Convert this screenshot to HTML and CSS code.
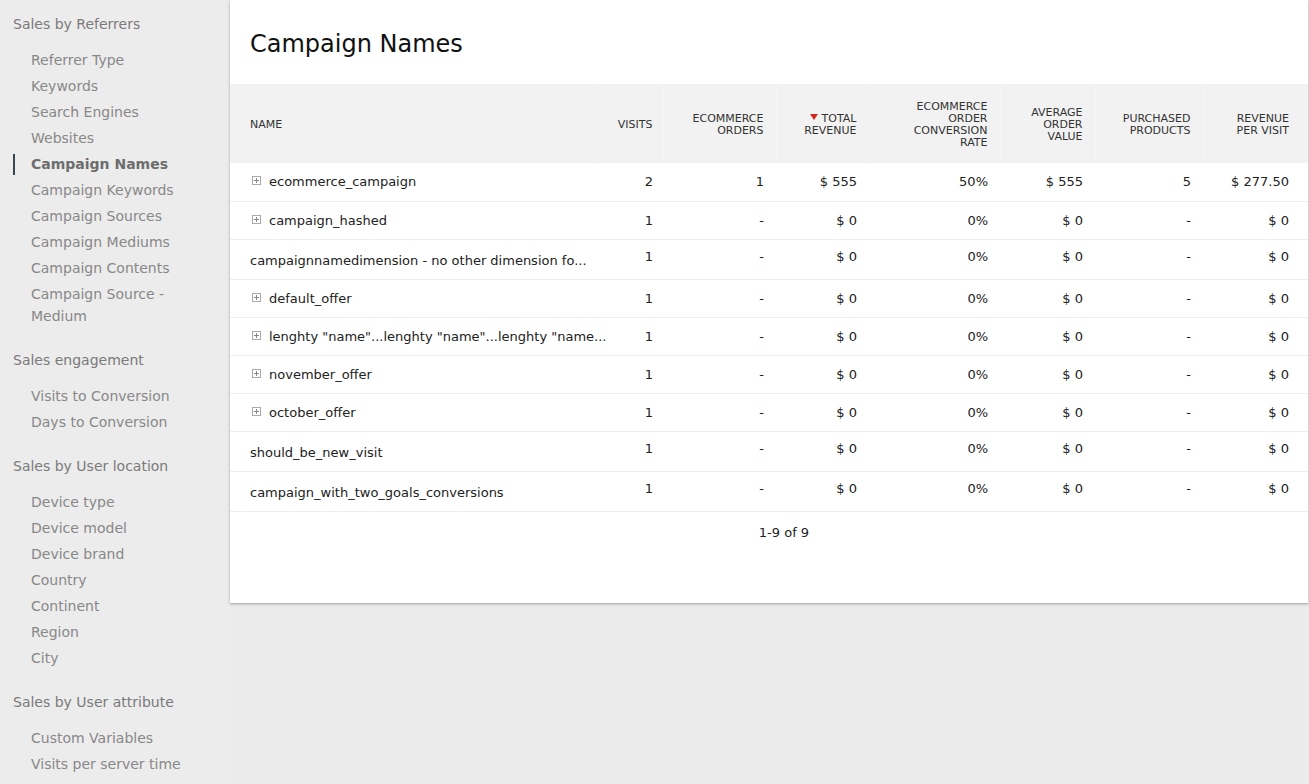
FILE: index.html
```html
<!DOCTYPE html>
<html>
<head>
<meta charset="utf-8">
<link rel="stylesheet" href="styles.css">
</head>
<body>
<div class="page">
  <nav class="sidebar">
    <div class="group">
      <div class="group-title">Sales by Referrers</div>
      <ul class="items">
        <li>Referrer Type</li>
        <li>Keywords</li>
        <li>Search Engines</li>
        <li>Websites</li>
        <li class="active">Campaign Names</li>
        <li>Campaign Keywords</li>
        <li>Campaign Sources</li>
        <li>Campaign Mediums</li>
        <li>Campaign Contents</li>
        <li>Campaign Source - Medium</li>
      </ul>
    </div>
    <div class="group">
      <div class="group-title">Sales engagement</div>
      <ul class="items">
        <li>Visits to Conversion</li>
        <li>Days to Conversion</li>
      </ul>
    </div>
    <div class="group">
      <div class="group-title">Sales by User location</div>
      <ul class="items">
        <li>Device type</li>
        <li>Device model</li>
        <li>Device brand</li>
        <li>Country</li>
        <li>Continent</li>
        <li>Region</li>
        <li>City</li>
      </ul>
    </div>
    <div class="group">
      <div class="group-title">Sales by User attribute</div>
      <ul class="items">
        <li>Custom Variables</li>
        <li>Visits per server time</li>
      </ul>
    </div>
  </nav>
  <main class="main">
    <section class="card">
      <h2 class="card-title">Campaign Names</h2>
      <table class="report">
        <colgroup>
          <col class="c-name"><col class="c-visits"><col class="c-orders"><col class="c-rev"><col class="c-conv"><col class="c-avg"><col class="c-prod"><col class="c-rpv">
        </colgroup>
        <thead>
          <tr>
            <th class="name">NAME</th>
            <th class="visits">VISITS</th>
            <th>ECOMMERCE<br>ORDERS</th>
            <th><span class="sort"></span>TOTAL<br>REVENUE</th>
            <th>ECOMMERCE<br>ORDER<br>CONVERSION<br>RATE</th>
            <th>AVERAGE<br>ORDER<br>VALUE</th>
            <th>PURCHASED<br>PRODUCTS</th>
            <th class="last">REVENUE<br>PER VISIT</th>
          </tr>
        </thead>
        <tbody>
          <tr class="sub">
            <td class="name"><span class="plus"></span>ecommerce_campaign</td>
            <td class="visits">2</td><td>1</td><td>$ 555</td><td>50%</td><td>$ 555</td><td>5</td><td class="last">$ 277.50</td>
          </tr>
          <tr class="sub">
            <td class="name"><span class="plus"></span>campaign_hashed</td>
            <td class="visits">1</td><td>-</td><td>$ 0</td><td>0%</td><td>$ 0</td><td>-</td><td class="last">$ 0</td>
          </tr>
          <tr class="plain">
            <td class="name">campaignnamedimension - no other dimension fo...</td>
            <td class="visits">1</td><td>-</td><td>$ 0</td><td>0%</td><td>$ 0</td><td>-</td><td class="last">$ 0</td>
          </tr>
          <tr class="sub">
            <td class="name"><span class="plus"></span>default_offer</td>
            <td class="visits">1</td><td>-</td><td>$ 0</td><td>0%</td><td>$ 0</td><td>-</td><td class="last">$ 0</td>
          </tr>
          <tr class="sub">
            <td class="name"><span class="plus"></span>lenghty "name"...lenghty "name"...lenghty "name...</td>
            <td class="visits">1</td><td>-</td><td>$ 0</td><td>0%</td><td>$ 0</td><td>-</td><td class="last">$ 0</td>
          </tr>
          <tr class="sub">
            <td class="name"><span class="plus"></span>november_offer</td>
            <td class="visits">1</td><td>-</td><td>$ 0</td><td>0%</td><td>$ 0</td><td>-</td><td class="last">$ 0</td>
          </tr>
          <tr class="sub">
            <td class="name"><span class="plus"></span>october_offer</td>
            <td class="visits">1</td><td>-</td><td>$ 0</td><td>0%</td><td>$ 0</td><td>-</td><td class="last">$ 0</td>
          </tr>
          <tr class="plain">
            <td class="name">should_be_new_visit</td>
            <td class="visits">1</td><td>-</td><td>$ 0</td><td>0%</td><td>$ 0</td><td>-</td><td class="last">$ 0</td>
          </tr>
          <tr class="plain">
            <td class="name">campaign_with_two_goals_conversions</td>
            <td class="visits">1</td><td>-</td><td>$ 0</td><td>0%</td><td>$ 0</td><td>-</td><td class="last">$ 0</td>
          </tr>
        </tbody>
      </table>
      <div class="pager">1-9 of 9</div>
    </section>
  </main>
</div>
</body>
</html>
```

FILE: styles.css
```css
* { box-sizing: border-box; }
html, body {
  margin: 0;
  padding: 0;
  background: #ebebeb;
  font-family: "DejaVu Sans", "Liberation Sans", sans-serif;
}
.page {
  display: flex;
  align-items: flex-start;
  width: 1309px;
}
.sidebar {
  width: 230px;
  flex: 0 0 230px;
  background: #ececec;
  padding: 13px 0 0 0;
  min-height: 784px;
}
.group { margin-bottom: 20px; }
.group-title {
  font-size: 14px;
  color: #7a7a7a;
  line-height: 22px;
  padding-left: 13px;
  margin-bottom: 12px;
}
.items {
  list-style: none;
  margin: 0;
  padding: 0;
}
.items li {
  font-size: 14px;
  line-height: 22px;
  color: #888;
  padding: 2px 30px 2px 31px;
  position: relative;
}
.items li.active {
  font-weight: bold;
  color: #6d6d6d;
}
.items li.active::before {
  content: "";
  position: absolute;
  left: 13px;
  top: 3px;
  width: 2px;
  height: 21px;
  background: #37474f;
}
.main {
  flex: 1;
}
.card {
  width: 1078px;
  height: 603px;
  background: #fff;
  box-shadow: 0 1px 3px rgba(0,0,0,0.25), 0 1px 1px rgba(0,0,0,0.08);
}
.card-title {
  margin: 0;
  height: 84px;
  padding: 29px 0 0 20px;
  font-size: 24px;
  font-weight: normal;
  line-height: 30px;
  color: #111;
}
.report {
  width: 1078px;
  table-layout: fixed;
  border-collapse: collapse;
}
.c-name { width: 367px; }
.c-visits { width: 66px; }
.c-orders { width: 113px; }
.c-rev { width: 93px; }
.c-conv { width: 131px; }
.c-avg { width: 95px; }
.c-prod { width: 108px; }
.c-rpv { width: 105px; }
.report th {
  height: 79px;
  background: #f2f2f2;
  font-size: 11px;
  font-weight: normal;
  line-height: 12px;
  color: #333;
  text-align: right;
  padding: 2px 12px 0 0;
  vertical-align: middle;
  border-left: 1px solid #f5f5f5;
}
.report th.name {
  text-align: left;
  padding-left: 20px;
  border-left: none;
}
.report .visits { padding-right: 10px; }
.report .last { padding-right: 19px; }
.sort {
  display: inline-block;
  width: 0;
  height: 0;
  border-left: 4.5px solid transparent;
  border-right: 4.5px solid transparent;
  border-top: 6px solid #d4291f;
  margin-right: 4px;
  vertical-align: 2px;
}
.report td {
  font-size: 13px;
  color: #222;
  text-align: right;
  padding: 0 12px 0 0;
  border-bottom: 1px solid #eee;
  white-space: nowrap;
  vertical-align: middle;
}
.report td.name {
  text-align: left;
  padding-left: 20px;
  overflow: visible;
}
.report tr.sub td { height: 38px; }
.report tr.plain td { height: 40px; padding-bottom: 5px; }
.report tr.plain td.name { padding-bottom: 0; padding-top: 2px; }
.report tr.plain td.visits { padding-right: 10px; }
.report tr.plain td.last { padding-right: 19px; }
.plus {
  display: inline-block;
  width: 9px;
  height: 9px;
  border: 1px solid #aaa;
  margin: 0 8px 0 2px;
  position: relative;
  vertical-align: 1px;
}
.plus::before, .plus::after {
  content: "";
  position: absolute;
  background: #888;
}
.plus::before { left: 1px; top: 3px; width: 5px; height: 1px; }
.plus::after { left: 3px; top: 1px; width: 1px; height: 5px; }
.pager {
  font-size: 13px;
  color: #222;
  text-align: center;
  padding: 13px 0 0 30px;
  line-height: 16px;
}
```
